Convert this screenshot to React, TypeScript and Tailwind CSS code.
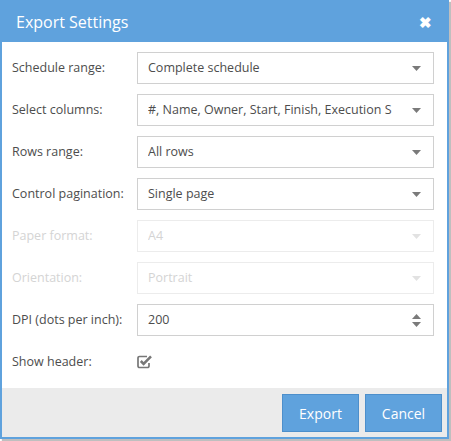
import React from 'react';

const font = { fontFamily: '"Open Sans", "Noto Sans", sans-serif' };

function Caret({ light }: { light?: boolean }) {
  return (
    <svg width="9" height="5" viewBox="0 0 9 5" className="flex-none">
      <path d="M0 0 L9 0 L4.5 5 Z" fill={light ? '#e2e2e2' : '#7a7a7a'} />
    </svg>
  );
}

function Spinner() {
  return (
    <div className="flex flex-col gap-[3px] flex-none">
      <svg width="9" height="5" viewBox="0 0 9 5">
        <path d="M0 5 L9 5 L4.5 0 Z" fill="#7a7a7a" />
      </svg>
      <svg width="9" height="5" viewBox="0 0 9 5">
        <path d="M0 0 L9 0 L4.5 5 Z" fill="#7a7a7a" />
      </svg>
    </div>
  );
}

function CheckIcon() {
  return (
    <svg width="16" height="14" viewBox="0 0 16 14">
      <path
        d="M10 1.5 H2.5 A1.5 1.5 0 0 0 1 3 V11 A1.5 1.5 0 0 0 2.5 12.5 H10.5 A1.5 1.5 0 0 0 12 11 V8"
        fill="none"
        stroke="#777"
        strokeWidth="1.7"
      />
      <path d="M3.8 6 L6.6 8.8 L14 1.4" fill="none" stroke="#777" strokeWidth="2.6" />
    </svg>
  );
}

function Row({
  label,
  value,
  disabled,
  spinner,
}: {
  label: string;
  value: string;
  disabled?: boolean;
  spinner?: boolean;
}) {
  return (
    <div className="flex items-center h-[32px]">
      <div className={`w-[125px] flex-none text-[12.5px] ${disabled ? 'text-[#d4d4d4]' : 'text-[#4d4d4d]'}`}>
        {label}
      </div>
      <div
        className={`flex-1 h-full flex items-center pl-[10px] pr-[12px] border ${
          disabled ? 'border-[#ececec]' : 'border-[#d0d0d0]'
        }`}
      >
        <span
          className={`flex-1 text-[12.5px] whitespace-nowrap overflow-hidden ${
            disabled ? 'text-[#d4d4d4]' : 'text-[#4d4d4d]'
          }`}
        >
          {value}
        </span>
        {spinner ? <Spinner /> : <Caret light={disabled} />}
      </div>
    </div>
  );
}

export default function App() {
  return (
    <div className="w-[451px] h-[441px] bg-white" style={font}>
      <div className="w-[449px] h-[439px] border-2 border-[#5fa2dd] flex flex-col shadow-[2px_2px_1px_rgba(0,0,0,0.25)]">
        {/* Header */}
        <div className="h-[42px] -mt-[2px] -mx-[2px] pt-[2px] px-[16px] bg-[#5fa2dd] flex items-center justify-between flex-none">
          <span className="text-white text-[16px]">Export Settings</span>
          <span className="text-white text-[15px] font-bold leading-none mr-[1px]">✖</span>
        </div>

        {/* Body */}
        <div className="flex-1 bg-white pt-[10px] pl-[10px] pr-[13px] flex flex-col gap-[10px]">
          <Row label="Schedule range:" value="Complete schedule" />
          <Row label="Select columns:" value="#, Name, Owner, Start, Finish, Execution S" />
          <Row label="Rows range:" value="All rows" />
          <Row label="Control pagination:" value="Single page" />
          <Row label="Paper format:" value="A4" disabled />
          <Row label="Orientation:" value="Portrait" disabled />
          <Row label="DPI (dots per inch):" value="200" spinner />
          <div className="flex items-center h-[28px] mt-[2px]">
            <div className="w-[125px] flex-none text-[12.5px] text-[#4d4d4d]">Show header:</div>
            <CheckIcon />
          </div>
        </div>

        {/* Footer */}
        <div className="h-[49px] flex-none bg-[#ebebeb] flex items-start justify-end gap-[6px] pt-[6px] pr-[5px]">
          <button className="w-[77px] h-[38px] bg-[#5fa2dd] border border-[#4d8fcb] text-white text-[14px]">
            Export
          </button>
          <button className="w-[77px] h-[38px] bg-[#5fa2dd] border border-[#4d8fcb] text-white text-[14px]">
            Cancel
          </button>
        </div>
      </div>
    </div>
  );
}
